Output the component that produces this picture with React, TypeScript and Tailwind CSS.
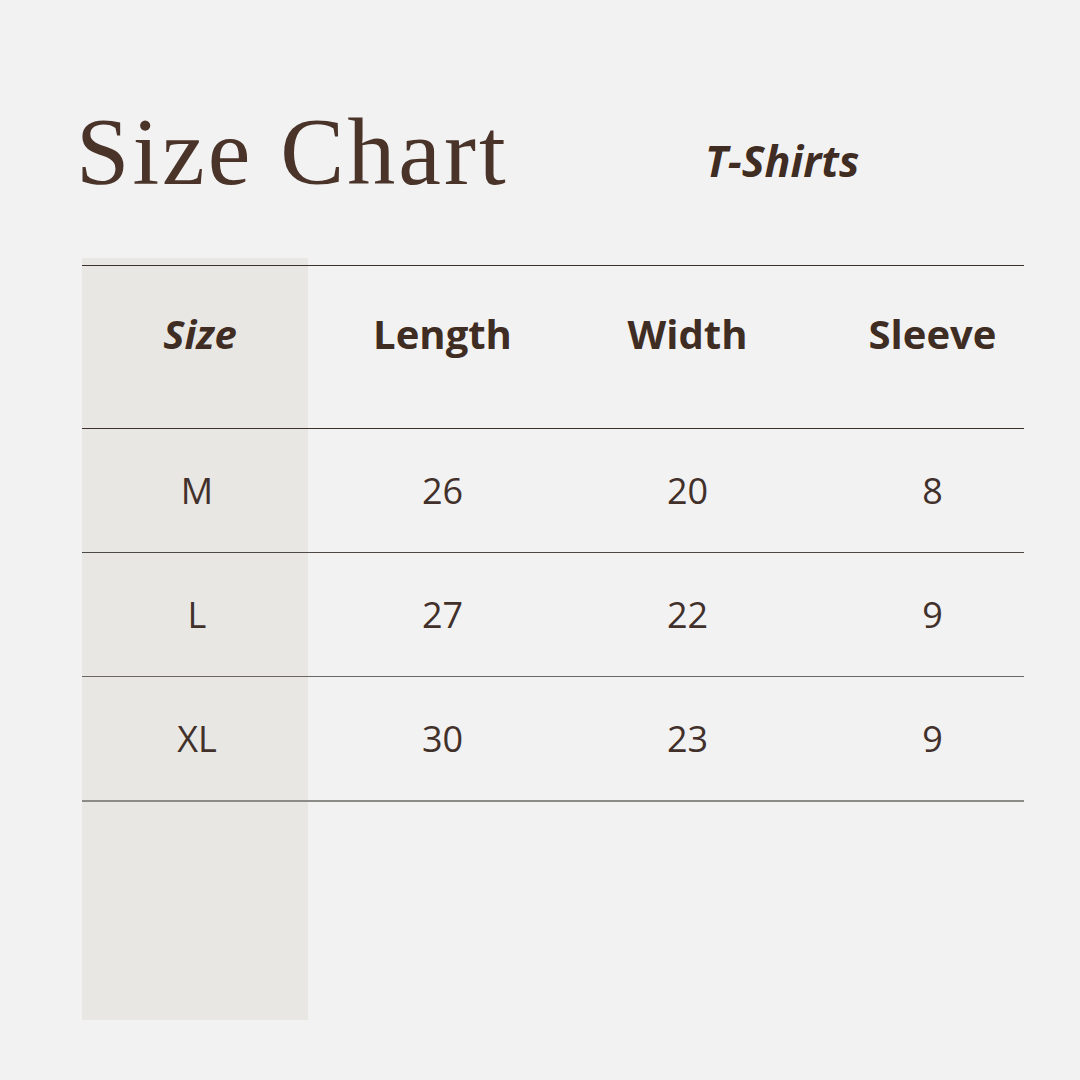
import React from "react";

const rows = [
  ["M", "26", "20", "8"],
  ["L", "27", "22", "9"],
  ["XL", "30", "23", "9"],
];

export default function App() {
  return (
    <div className="w-[1080px] h-[1080px] bg-[#f2f2f2] text-[#42302a] overflow-hidden">
      <div className="h-[258px] flex items-start pl-[76px] pt-[104px]">
        <div
          className="w-[629px] text-[96px] leading-none tracking-[3px] text-[#4a3429]"
          style={{ fontFamily: '"Liberation Serif", serif' }}
        >
          Size Chart
        </div>
        <div
          className="mt-[35px] text-[43px] leading-none font-bold italic text-[#3f2c22]"
          style={{ fontFamily: '"Open Sans", sans-serif' }}
        >
          T-Shirts
        </div>
      </div>
      <div className="ml-[82px] w-[942px]" style={{ fontFamily: '"Open Sans", sans-serif' }}>
        <div className="h-[7px] w-[226px] bg-[#e8e7e3]" />
        <div className="flex h-[164px] border-y border-[#3d312c] text-[40px] font-bold text-[#3f2c22]">
          <div className="w-[226px] shrink-0 bg-[#e8e7e3] flex items-center justify-center pl-[10px] pb-[26px] italic">
            Size
          </div>
          <div className="ml-[12px] w-[245px] shrink-0 flex items-center justify-center pb-[26px]">Length</div>
          <div className="w-[245px] shrink-0 flex items-center justify-center pb-[26px]">Width</div>
          <div className="w-[245px] shrink-0 flex items-center justify-center pb-[26px]">Sleeve</div>
        </div>
        {rows.map((r, i) => (
          <div
            key={r[0]}
            className={
              i === 2
                ? "flex h-[125px] border-b-2 border-[#8d8b88] text-[36px]"
                : i === 0
                ? "flex h-[124px] border-b border-[#4f4946] text-[36px]"
                : "flex h-[124px] border-b border-[#6a6663] text-[36px]"
            }
          >
            <div className="w-[226px] shrink-0 bg-[#e8e7e3] flex items-center justify-center pl-[4px]">{r[0]}</div>
            <div className="ml-[12px] w-[245px] shrink-0 flex items-center justify-center">{r[1]}</div>
            <div className="w-[245px] shrink-0 flex items-center justify-center">{r[2]}</div>
            <div className="w-[245px] shrink-0 flex items-center justify-center">{r[3]}</div>
          </div>
        ))}
        <div className="h-[218px] w-[226px] bg-[#e8e7e3]" />
      </div>
    </div>
  );
}
